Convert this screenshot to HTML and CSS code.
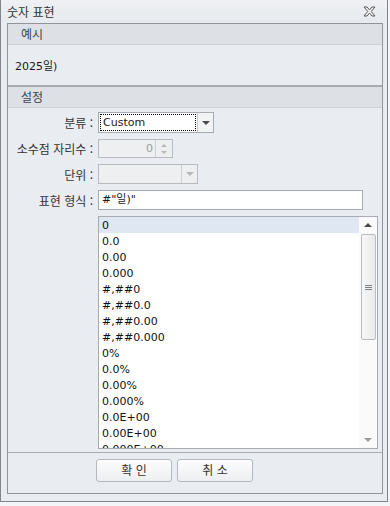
FILE: index.html
```html
<!DOCTYPE html>
<html lang="ko">
<head>
  <meta charset="UTF-8">
  <title>숫자 표현</title>
  <link rel="stylesheet" href="styles.css">
</head>
<body>

  <div class="window">
    <!-- 제목 표시줄 -->
    <div class="titlebar">
      <span class="title">숫자 표현</span>
      <svg class="close" width="13" height="11" viewBox="-1 -1 13 11">
        <polygon points="0,0 3,0 5.5,3 8,0 11,0 7.2,4.5 11,9 8,9 5.5,6 3,9 0,9 3.8,4.5" fill="#f7f7f7" stroke="#555" stroke-width="1" stroke-linejoin="round"/>
      </svg>
    </div>

    <div class="panel">
      <!-- 예시 -->
      <div class="group-head">예시</div>
      <div class="sample-body">2025일)</div>

      <!-- 설정 -->
      <div class="group-head">설정</div>
      <div class="form">
        <div class="row">
          <span class="label">분류 :</span>
          <div class="combo combo-kind">
            <div class="combo-text"><span class="focus">Custom</span></div>
            <div class="combo-btn"><span class="tri-down"></span></div>
          </div>
        </div>
        <div class="row">
          <span class="label">소수점 자리수 :</span>
          <div class="spin disabled">
            <div class="spin-text">0</div>
            <div class="spin-btns">
              <span class="tri-up small"></span>
              <span class="tri-down small"></span>
            </div>
          </div>
        </div>
        <div class="row">
          <span class="label">단위 :</span>
          <div class="combo combo-unit disabled">
            <div class="combo-text"></div>
            <div class="combo-btn"><span class="tri-down"></span></div>
          </div>
        </div>
        <div class="row">
          <span class="label">표현 형식 :</span>
          <div class="textbox">#"일)"</div>
        </div>
        <div class="row list-row">
          <span class="label"></span>
          <div class="listbox">
            <div class="items">
              <div class="item selected">0</div>
              <div class="item">0.0</div>
              <div class="item">0.00</div>
              <div class="item">0.000</div>
              <div class="item">#,##0</div>
              <div class="item">#,##0.0</div>
              <div class="item">#,##0.00</div>
              <div class="item">#,##0.000</div>
              <div class="item">0%</div>
              <div class="item">0.0%</div>
              <div class="item">0.00%</div>
              <div class="item">0.000%</div>
              <div class="item">0.0E+00</div>
              <div class="item">0.00E+00</div>
              <div class="item">0.000E+00</div>
            </div>
            <div class="scrollbar">
              <div class="sb-arrow"><span class="tri-up"></span></div>
              <div class="sb-track">
                <div class="sb-thumb"><span class="grip"></span></div>
              </div>
              <div class="sb-arrow"><span class="tri-down light"></span></div>
            </div>
          </div>
        </div>
      </div>

      <!-- 버튼 -->
      <div class="buttons">
        <div class="btn">확 인</div>
        <div class="btn">취 소</div>
      </div>
    </div>
  </div>

</body>
</html>
```

FILE: styles.css
```css
/* 기본 */
body {
  margin: 0;
  background: #f3f5f7;
  font-family: "DejaVu Sans", "Noto Sans CJK KR", sans-serif;
  font-size: 11px;
  color: #1a1a1a;
}

/* 창 */
.window {
  box-sizing: border-box;
  width: 388px;
  height: 502px;
  background: #e9ecf0;
  border: 1px solid #7f868d;
  border-top: 0;
}

/* 제목 표시줄 */
.titlebar {
  height: 23px;
  display: flex;
  align-items: center;
  justify-content: space-between;
  padding: 0 11px 0 6px;
  background: linear-gradient(#eef0f3, #e7eaee);
}
.title {
  font-family: "Noto Sans CJK KR", sans-serif;
  font-size: 12px;
  color: #333;
}
.close {
  display: block;
}

/* 안쪽 패널 */
.panel {
  box-sizing: border-box;
  height: 471px;
  margin: 0 4px 0 6px;
  border: 1px solid #8f959b;
  background: #e9ecf0;
  display: flex;
  flex-direction: column;
}
.group-head {
  height: 20px;
  line-height: 20px;
  padding-left: 13px;
  background: #dde1e6;
  border-bottom: 1px solid #cdd2d7;
  font-family: "Noto Sans CJK KR", sans-serif;
  font-size: 12px;
  color: #3a4450;
}
.sample-body {
  height: 40px;
  display: flex;
  align-items: center;
  padding-left: 7px;
  font-size: 11px;
  border-bottom: 2px solid #a6acb2;
}

/* 설정 폼 */
.form {
  height: 345px;
  box-sizing: border-box;
  padding-top: 4px;
  display: flex;
  flex-direction: column;
  gap: 6px;
  border-bottom: 1px solid #a6acb2;
}
.row {
  display: flex;
  align-items: center;
  gap: 5px;
}
.label {
  width: 85px;
  flex: none;
  text-align: right;
  line-height: 17px;
  font-family: "Noto Sans CJK KR", sans-serif;
  font-size: 12px;
  color: #333;
}

/* 콤보박스 */
.combo {
  box-sizing: border-box;
  height: 21px;
  display: flex;
  border: 1px solid #a7acb2;
  background: #fff;
}
.combo-kind { width: 116px; }
.combo-unit { width: 100px; height: 20px; }
.combo-text {
  flex: 1;
  padding: 1px;
  display: flex;
}
.focus {
  flex: 1;
  border: 1px dotted #000;
  padding-left: 2px;
  line-height: 15px;
  font-size: 11px;
}
.combo-btn {
  width: 15px;
  border-left: 1px solid #c3c7cb;
  background: #f2f3f5;
  display: flex;
  align-items: center;
  justify-content: center;
}
.disabled {
  background: #eeeff1;
  border-color: #b7bbbf;
}
.disabled .combo-btn {
  background: #eeeff1;
  border-left-color: #cdd0d4;
}
.disabled .tri-down,
.disabled .tri-up {
  border-top-color: #b5b8bc;
  border-bottom-color: #b5b8bc;
}

/* 삼각형 */
.tri-down {
  width: 0;
  height: 0;
  border-left: 4px solid transparent;
  border-right: 4px solid transparent;
  border-top: 4px solid #4a4a4a;
}
.tri-up {
  width: 0;
  height: 0;
  border-left: 4px solid transparent;
  border-right: 4px solid transparent;
  border-bottom: 4px solid #4a4a4a;
}
.tri-down.small, .tri-up.small {
  border-left-width: 3px;
  border-right-width: 3px;
  border-top-width: 3px;
  border-bottom-width: 3px;
}
.tri-down.small { border-bottom: 0; }
.tri-up.small { border-top: 0; }
.tri-down.light { border-top-color: #9a9da1; }

/* 스핀 박스 */
.spin {
  box-sizing: border-box;
  width: 75px;
  height: 19px;
  display: flex;
  border: 1px solid #b7bbbf;
}
.spin-text {
  flex: 1;
  text-align: right;
  padding-right: 2px;
  line-height: 17px;
  color: #9a9a9a;
  font-size: 11px;
}
.spin-btns {
  width: 16px;
  border-left: 1px solid #cdd0d4;
  display: flex;
  flex-direction: column;
  align-items: center;
  justify-content: center;
  gap: 4px;
}

/* 텍스트 박스 */
.textbox {
  box-sizing: border-box;
  width: 265px;
  height: 20px;
  border: 1px solid #a7acb2;
  background: #fff;
  padding-left: 3px;
  line-height: 18px;
  font-size: 11px;
}

/* 목록 */
.list-row {
  height: 233px;
  align-items: stretch;
}
.listbox {
  box-sizing: border-box;
  width: 280px;
  height: 233px;
  border: 1px solid #a7acb2;
  background: #fff;
  display: flex;
  overflow: hidden;
}
.items {
  flex: 1;
  overflow: hidden;
}
.item {
  box-sizing: border-box;
  height: 16px;
  padding: 2px 0 0 3px;
  line-height: 14px;
  font-size: 11px;
  color: #111;
  white-space: nowrap;
}
.item.selected {
  background: #dfe7f2;
}

/* 스크롤바 */
.scrollbar {
  width: 18px;
  display: flex;
  flex-direction: column;
  background: #fafafa;
}
.sb-arrow {
  height: 16px;
  display: flex;
  align-items: center;
  justify-content: center;
}
.sb-track {
  flex: 1;
  padding: 1px 1px 0 2px;
}
.sb-thumb {
  box-sizing: border-box;
  height: 106px;
  border: 1px solid #b9bdc1;
  border-radius: 2px;
  background: linear-gradient(to right, #f7f7f7, #e8e9ea);
  display: flex;
  align-items: center;
  justify-content: center;
}
.grip {
  width: 7px;
  height: 5px;
  border-top: 1px solid #7b7f83;
  border-bottom: 1px solid #7b7f83;
  box-sizing: border-box;
  background: linear-gradient(transparent 1px, #7b7f83 1px, #7b7f83 2px, transparent 2px);
}

/* 버튼 */
.buttons {
  flex: 1;
  display: flex;
  gap: 5px;
  padding: 6px 0 0 88px;
}
.btn {
  box-sizing: border-box;
  width: 76px;
  height: 23px;
  border: 1px solid #b4b9be;
  border-radius: 3px;
  background: linear-gradient(#fdfdfd, #eceef1);
  text-align: center;
  line-height: 20px;
  font-family: "Noto Sans CJK KR", sans-serif;
  font-size: 12px;
  color: #333;
}
```
